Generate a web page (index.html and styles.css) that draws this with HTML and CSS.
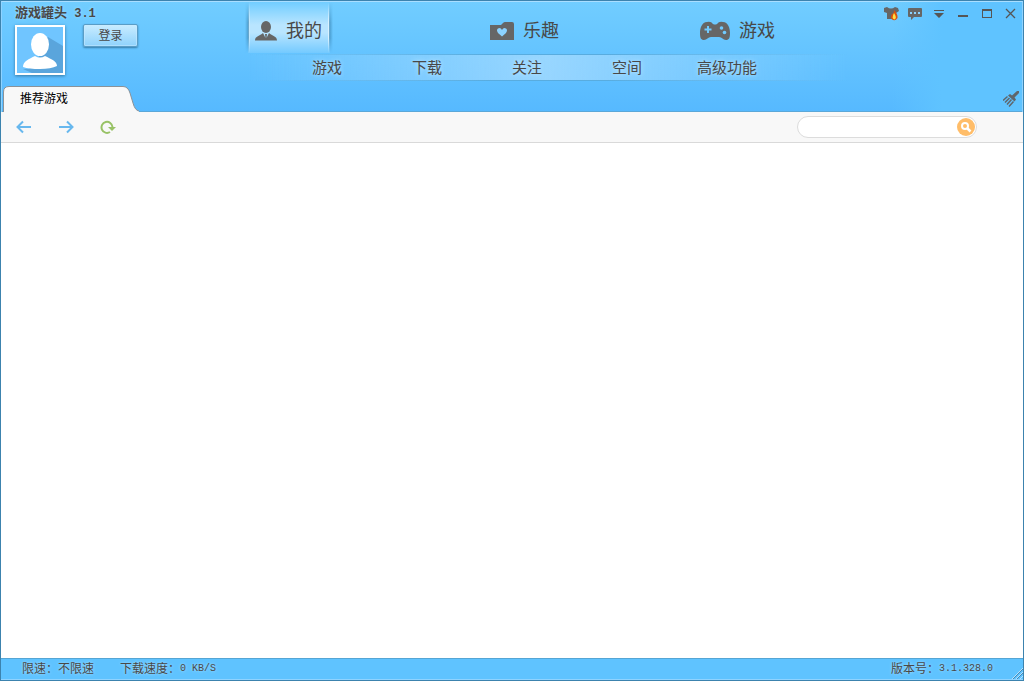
FILE: index.html
```html
<!DOCTYPE html>
<html lang="zh-CN">
<head>
<meta charset="utf-8">
<title>游戏罐头 3.1</title>
<link rel="stylesheet" href="styles.css">
</head>
<body>
<div class="app">
  <header class="header">
    <section class="account">
      <h1 class="title">游戏罐头<span> 3.1</span></h1>
      <div class="user">
        <svg class="avatar" viewBox="0 0 50 50" role="img" aria-label="头像">
          <rect width="50" height="50" fill="#fff"/>
          <rect x="2" y="2" width="46" height="46" fill="#70c5ff"/>
          <path d="M33 12L48 21V48H31L14 44L26 29Z" fill="#5aa5dc"/>
          <path d="M8 44L17 48H34L40 43Z" fill="#5aa5dc"/>
          <ellipse cx="25" cy="19.500" rx="9" ry="11.500" fill="#fff"/>
          <path d="M8 42C8 36 14 34 20 31Q25 34 30 31C36 34 42 36 42 41Q36 44 25 44Q14 44 8 42Z" fill="#fff"/>
        </svg>
        <button class="login" type="button">登录</button>
      </div>
    </section>
    <nav class="nav">
      <div class="main-nav">
        <a class="main-item active" href="#mine">
          <svg width="22" height="20" viewBox="0 0 22 20" fill="#666"><ellipse cx="11" cy="6" rx="5" ry="6"/><path d="M0 19.500C0 15 5 15 8 12L10.500 17L10 13H12L11.500 17L14 12C17 15 22 15 22 19.500Z"/></svg>
          <span>我的</span>
        </a>
        <a class="main-item" href="#fun">
          <svg width="24" height="20" viewBox="0 0 24 20"><path fill="#666" d="M0 4H11L13 2Q14 1 15 1H22Q24 1 24 3V19H0Z"/><path fill="#8bd2ff" d="M12 15.500L8 12Q6 9 8 7.500Q10.500 6 12 9Q13.500 6 16 7.500Q18 9 16 12Z"/></svg>
          <span>乐趣</span>
        </a>
        <a class="main-item" href="#games">
          <svg width="30" height="20" viewBox="0 0 30 20"><path fill="#666" d="M7 1Q11 0 13 3Q15 4 17 3Q19 0 23 1C28 1 30 7 30 12C30 17 29 19 26 19C23 19 22 16 19 16H11C8 16 7 19 4 19C1 19 0 17 0 12C0 7 2 1 7 1Z"/><path stroke="#70caff" stroke-width="2" d="M8 5V12M4.500 8.500H11.500"/><g fill="#70caff"><circle cx="21.500" cy="7" r="1.800"/><circle cx="24.500" cy="11.500" r="1.800"/></g></svg>
          <span>游戏</span>
        </a>
      </div>
      <div class="sub-nav">
        <a href="#g">游戏</a><a href="#d">下载</a><a href="#f">关注</a><a href="#s">空间</a><a href="#a">高级功能</a>
      </div>
    </nav>
    <div class="controls">
      <button type="button" aria-label="皮肤"><svg viewBox="0 0 16 16"><path fill="#666" d="M1 2L4 1Q8 4 12 1L15 2L16 5L13 7V13H4V7L1 6Z"/><path fill="#d9520e" d="M11 4Q15 8 14.500 12Q12 16 8.500 13Q7 11 9 8Q11 8 11 4Z"/><path fill="#ffde45" d="M11 7Q14.500 12 11.500 13.500Q8 12.500 11 7Z"/></svg></button>
      <button type="button" aria-label="消息"><svg viewBox="0 0 16 16"><path fill="#666" d="M2 2H14Q15 2 15 3V10Q15 11 14 11H7L4 14V11H2Q1 11 1 10V3Q1 2 2 2Z"/><path fill="#8bd2ff" d="M3 6h2v2H3zM7 6h2v2H7zM11 6h2v2h-2z"/></svg></button>
      <button type="button" aria-label="菜单"><svg viewBox="0 0 16 16" fill="#555"><path d="M3 4h10v1H3zM3 7h10L8 12z"/></svg></button>
      <button type="button" aria-label="最小化"><svg viewBox="0 0 16 16" fill="#555"><path d="M3 9h10v2H3z"/></svg></button>
      <button type="button" aria-label="最大化"><svg viewBox="0 0 16 16" fill="#555" fill-rule="evenodd"><path d="M3 3h10v9H3zM4 5v6h8V5z"/></svg></button>
      <button type="button" aria-label="关闭"><svg viewBox="0 0 16 16"><path stroke="#555" stroke-width="1.300" d="M3 3L12 12M12 3L3 12"/></svg></button>
    </div>
    <div class="tabs">
      <button class="tab" type="button">
        <svg class="tab-shape" viewBox="0 0 136 26"><path fill="#f8f8f8" d="M0.500 26V6Q0.500 0.500 6 0.500H120Q125 0.500 127 7L130 17Q132 24.500 136 25V26Z"/><path fill="none" stroke="#8b9298" d="M0.500 26V6Q0.500 0.500 6 0.500H120Q125 0.500 127 7L130 17Q132 24.500 136 25"/></svg>
        <span>推荐游戏</span>
      </button>
      <button class="brush" type="button" aria-label="清理"><svg viewBox="0 0 16 16"><path fill="#5f666c" d="M14 0H16V2L11.500 6.500L13 8.500L11.500 10.500L5 4.500L7 3L9 4.500Z"/><path stroke="#5f666c" stroke-width="1.500" d="M4.500 5.500L0 9.500M6.500 7L2 11.500M8.500 8.500L4 13.500M10.500 10.500L6 15.500"/></svg></button>
    </div>
  </header>
  <div class="toolbar">
    <button type="button" aria-label="后退"><svg viewBox="0 0 16 16"><path d="M15 8H2M7 2.500L1.500 8L7 13.500"/></svg></button>
    <button type="button" aria-label="前进"><svg viewBox="0 0 16 16"><path d="M1 8H14M9 2.500L14.500 8L9 13.500"/></svg></button>
    <button class="reload" type="button" aria-label="刷新"><svg viewBox="0 0 16 16"><path d="M10 13A5.500 5.500 0 1 1 12.500 8"/><path class="head" d="M8 8H16L12 12Z"/></svg></button>
    <form class="search" role="search">
      <input type="text" aria-label="搜索">
      <button type="button" aria-label="搜索"><svg viewBox="0 0 18 18"><circle cx="9" cy="9" r="9" fill="#ffbd69"/><circle cx="8" cy="8" r="3" fill="none" stroke="#fff" stroke-width="2"/><path stroke="#fff" stroke-width="2.500" d="M10.500 10.500L13.500 13.500"/></svg></button>
    </form>
  </div>
  <main class="content"></main>
  <footer class="status">
    <span>限速：不限速</span>
    <span>下载速度：<span class="latin">0 KB/S</span></span>
    <span class="version">版本号：<span class="latin">3.1.328.0</span></span>
    <svg class="grip" viewBox="0 0 12 12"><path stroke="#b5e2ff" d="M1 12L12 1M5 12L12 5M9 12L12 9"/><path stroke="#4388b4" d="M2 12L12 2M6 12L12 6"/></svg>
  </footer>
</div>
</body>
</html>
```
FILE: styles.css
```css
* { box-sizing: border-box; }
body {
  margin: 0;
  font: 12px/16px "Liberation Sans", "Noto Sans CJK SC", sans-serif;
  color: #484848;
}
button { padding: 0; border: 0; background: none; font: inherit; color: inherit; }
svg { display: block; }
a { color: inherit; text-decoration: none; }
.app {
  display: flex;
  flex-direction: column;
  min-height: 100vh;
  border: 1px solid #3c83ae;
  background: #fff;
}
.header {
  display: grid;
  grid-template-columns: 246px 1fr 146px;
  grid-template-rows: 84px 26px;
  border-top: 1px solid #a9deff;
  border-right: 1px solid #8fd3ff;
  border-left: 1px solid #8fd3ff;
  background:
    linear-gradient(to left, #5fc3ff 80px, #5fc3ff00 130px),
    linear-gradient(#71cdff, #56b9ff);
}
.account { padding: 3px 0 0 13px; }
.title {
  margin: 0;
  font-size: 13px;
  line-height: 16px;
  white-space: pre;
  text-shadow: 0 0 3px #a9dfff;
}
.title span { font-family: "Liberation Mono", monospace; font-size: 12px; }
.user { display: flex; gap: 18px; margin-top: 3px; }
.avatar { width: 50px; height: 50px; box-shadow: 0 1px 3px #3378a5; }
.login {
  width: 55px;
  height: 23px;
  margin-top: -1px;
  border: 1px solid #5a9dc6;
  border-radius: 2px;
  background: linear-gradient(#c9ecff, #8fd2fc);
  box-shadow: inset 0 0 0 1px #c9eaff88, 0 1px 2px #367ca8;
}
.main-nav { display: grid; grid-template-columns: 234px 210px auto; justify-items: start; height: 52px; }
.main-item {
  display: flex;
  align-items: center;
  gap: 9px;
  height: 51px;
  padding: 6px 7px 0 8px;
  font-size: 18px;
  line-height: 24px;
}
.active {
  position: relative;
  padding-left: 7px;
  padding-right: 8px;
  background: linear-gradient(#71cdff, #b9e5ff 45%, #b9e5ff 60%, #74caff);
}
.active::before, .active::after {
  content: "";
  position: absolute;
  top: 0;
  bottom: 0;
  width: 4px;
}
.active::before { left: -3px; border-right: 1px solid #c4eaff; background: linear-gradient(to right, #347ca800, #347ca8aa); mask: linear-gradient(transparent, #000 40%, #000 70%, transparent); }
.active::after { right: -3px; border-left: 1px solid #d8f1ff; background: linear-gradient(to left, #347ca800, #347ca8aa); mask: linear-gradient(transparent, #000 40%, #000 70%, transparent); }
.sub-nav {
  display: grid;
  grid-template-columns: repeat(5, 100px);
  width: 600px;
  height: 27px;
  padding-left: 29px;
  border-top: 1px solid;
  border-bottom: 1px solid;
  border-image: linear-gradient(to right, #58acdf00, #58acdf 40%, #58acdf 60%, #58acdf00) 1;
  background: linear-gradient(to right, #a5dbff00, #a5dbffcc 50%, #a5dbff00);
  font-size: 15px;
  line-height: 25px;
  text-align: center;
  text-shadow: 0 0 4px #c9ebff;
}
.controls { display: flex; justify-content: flex-end; gap: 8px; padding: 4px 3px 0 0; }
.controls button, .controls svg { width: 16px; height: 16px; }
.tabs {
  grid-column: 1 / -1;
  display: flex;
  justify-content: space-between;
  border-bottom: 1px solid #5ca8d8;
  padding-left: 1px;
}
.tab { position: relative; width: 136px; height: 26px; padding-left: 17px; text-align: left; color: #000; }
.tab-shape { position: absolute; inset: 0; width: 136px; height: 26px; }
.tab span { position: relative; }
.brush { padding: 0 3px 0 0; }
.brush svg { width: 16px; height: 16px; }
.toolbar {
  display: flex;
  align-items: center;
  gap: 26px;
  height: 31px;
  padding: 0 46px 0 15px;
  border-bottom: 1px solid #d9d9d9;
  background: #f8f8f8;
}
.toolbar svg { width: 16px; height: 16px; fill: none; stroke: #68b8ee; stroke-width: 2; }
.toolbar .reload svg { stroke: #98c266; }
.toolbar .reload .head { fill: #98c266; stroke: none; }
.search {
  display: flex;
  align-items: center;
  width: 180px;
  height: 22px;
  margin-left: auto;
  padding-right: 1px;
  border: 1px solid #dcdcdc;
  border-radius: 11px;
  background: #fff;
}
.search input { flex: 1; min-width: 0; margin: 0 0 0 10px; padding: 0; border: 0; outline: 0; background: none; font: inherit; }
.search .search-button { flex: none; }
.search svg { width: 18px; height: 18px; stroke: none; }
.content { flex: 1; }
.status {
  display: flex;
  align-items: center;
  gap: 26px;
  height: 22px;
  padding-left: 21px;
  border-top: 1px solid #55a5d4;
  border-bottom: 1px solid #8fd3ff;
  background: #5fc3ff;
  text-shadow: 0 0 3px #b5e3ff;
}
.status > span { display: flex; align-items: center; white-space: pre; }
.latin { font-family: "Liberation Mono", monospace; font-size: 10px; }
.version { margin-left: auto; }
.grip { align-self: flex-end; width: 12px; height: 12px; margin-left: -8px; }
```
